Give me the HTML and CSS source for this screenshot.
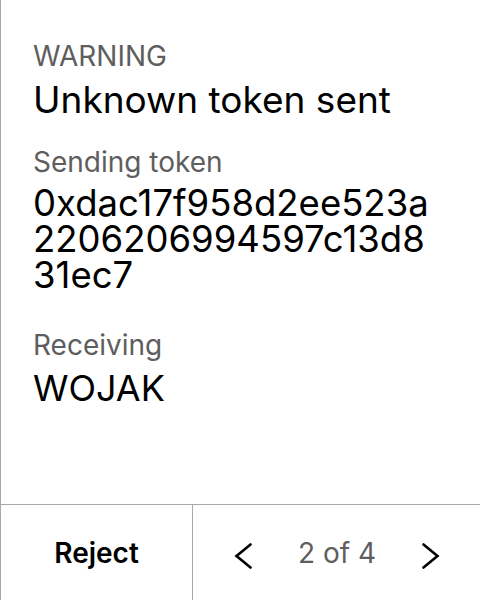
FILE: index.html
```html
<!DOCTYPE html>
<html>
<head>
<meta charset="utf-8">
<link rel="stylesheet" href="styles.css">
</head>
<body>
<div class="screen">
  <main class="content">
    <div class="field">
      <div class="label">WARNING</div>
      <div class="value title">Unknown token sent</div>
    </div>
    <div class="field field-send">
      <div class="label">Sending token</div>
      <div class="value hex">0xdac17f958d2ee523a2206206994597c13d831ec7</div>
    </div>
    <div class="field field-receive">
      <div class="label">Receiving</div>
      <div class="value">WOJAK</div>
    </div>
  </main>
  <footer class="actions">
    <button class="reject">Reject</button>
    <div class="pager">
      <button class="nav" aria-label="Previous">
        <svg width="20" height="26" viewBox="0 0 20 26"><path d="M16.5 1.5 L2.5 13 L16.5 24.5" fill="none" stroke="#000" stroke-width="2.6" stroke-linecap="round" stroke-linejoin="miter"/></svg>
      </button>
      <span class="count">2 of 4</span>
      <button class="nav" aria-label="Next">
        <svg width="20" height="26" viewBox="0 0 20 26"><path d="M3.5 1.5 L17.5 13 L3.5 24.5" fill="none" stroke="#000" stroke-width="2.6" stroke-linecap="round" stroke-linejoin="miter"/></svg>
      </button>
    </div>
  </footer>
</div>
</body>
</html>
```
FILE: styles.css
```css
html, body {
  margin: 0;
  padding: 0;
  background: #fff;
}
body {
  font-family: Inter, "Noto Sans", sans-serif;
  color: #000;
}
.screen {
  width: 479px;
  height: 600px;
  border-left: 1px solid #a8a8a8;
  display: flex;
  flex-direction: column;
}
.content {
  flex: 1;
  padding: 39px 32px 0 32px;
  display: flex;
  flex-direction: column;
}
.field-send {
  margin-top: 27px;
}
.field-receive {
  margin-top: 35px;
}
.label {
  font-size: 28px;
  line-height: 34px;
  color: #5e5e5e;
}
.value {
  font-size: 36px;
  line-height: 36px;
  margin-top: 9px;
}
.title {
  font-size: 37px;
}
.hex {
  font-size: 36.5px;
  word-break: break-all;
  margin-top: 6px;
  margin-right: 10px;
}
.field-receive .value {
  margin-top: 8px;
}
.actions {
  height: 95px;
  border-top: 1px solid #a8a8a8;
  display: grid;
  grid-template-columns: 192px 1fr;
}
button {
  font-family: inherit;
  background: none;
  border: 0;
  padding: 0;
  margin: 0;
  color: inherit;
}
.reject {
  font-size: 28px;
  font-weight: 600;
  border-right: 1px solid #a8a8a8;
}
.pager {
  display: flex;
  align-items: center;
  justify-content: space-between;
  padding: 0 40px 0 41px;
}
.nav {
  display: flex;
  align-items: center;
  margin-top: 6px;
}
.count {
  font-size: 28px;
  color: #5e5e5e;
}
```
